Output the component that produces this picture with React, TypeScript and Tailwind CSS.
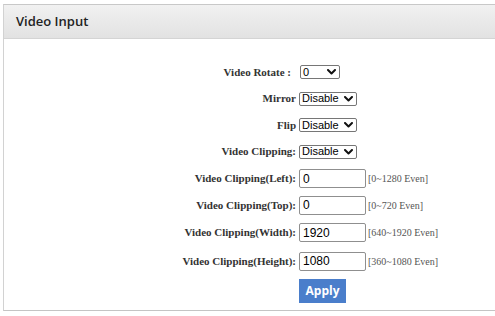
import React from "react";

const Chevron = () => (
  <svg width="9" height="6" viewBox="0 0 9 6" className="shrink-0">
    <path d="M1 1 L4.5 4.5 L8 1" fill="none" stroke="#111" strokeWidth="2" strokeLinecap="round" strokeLinejoin="round" />
  </svg>
);

function Select({ value, w }: { value: string; w: string }) {
  return (
    <div
      className={`${w} h-[14px] flex items-center justify-between border border-[#767676] rounded-[2px] bg-white pl-[2px] pr-[3px] text-[11px] leading-none text-black`}
      style={{ fontFamily: '"Liberation Sans", Arial, sans-serif' }}
    >
      <span>{value}</span>
      <Chevron />
    </div>
  );
}

function Input({ value }: { value: string }) {
  return (
    <input
      readOnly
      value={value}
      className="w-[67px] h-[19px] border border-[#8f8f8f] rounded-[2px] bg-white px-[3px] text-[12px] text-black outline-none"
      style={{ fontFamily: '"Liberation Sans", Arial, sans-serif' }}
    />
  );
}

const serif = { fontFamily: '"Liberation Serif", "Times New Roman", serif' };

function Row({ label, h, children, hint, labelPad = "pr-0" }: { label: string; h: string; children: React.ReactNode; hint?: string; labelPad?: string }) {
  return (
    <div className={`flex items-center ${h}`}>
      <div className={`w-[292px] text-right text-[11px] font-bold text-[#333] ${labelPad}`} style={serif}>
        {label}
      </div>
      <div className="ml-[3px] flex items-center">
        {children}
        {hint && (
          <span className="ml-[2px] text-[10px] text-[#555]" style={serif}>
            {hint}
          </span>
        )}
      </div>
    </div>
  );
}

export default function App() {
  return (
    <div className="w-full h-[316px] bg-white overflow-hidden pt-[4px] pl-[3px]">
      <div className="w-full border-l border-t border-b border-r-0 border-l-[#d2d2d2] border-t-[#c8c8c8] border-b-[#c4c4c4]">
        <div className="h-[34px] flex items-center pl-[12px] bg-gradient-to-b from-[#f1f1f1] to-[#e2e2e2] border-b border-[#d4d4d4]">
          <span
            className="text-[13px] font-semibold text-[#222]"
            style={{ fontFamily: '"Open Sans", "Noto Sans", sans-serif' }}
          >
            Video Input
          </span>
        </div>
        <div className="pt-[20px] pb-[7px]">
          <Row label="Video Rotate :" h="h-[26px]" labelPad="pr-[5px]">
            <div className="ml-[1px]">
              <Select value="0" w="w-[40px]" />
            </div>
          </Row>
          <Row label="Mirror" h="h-[27px]">
            <Select value="Disable" w="w-[58px]" />
          </Row>
          <Row label="Flip" h="h-[26px]">
            <Select value="Disable" w="w-[58px]" />
          </Row>
          <Row label="Video Clipping:" h="h-[27px]">
            <Select value="Disable" w="w-[58px]" />
          </Row>
          <Row label="Video Clipping(Left):" h="h-[27px]" hint="[0~1280 Even]">
            <Input value="0" />
          </Row>
          <Row label="Video Clipping(Top):" h="h-[26px]" hint="[0~720 Even]">
            <Input value="0" />
          </Row>
          <Row label="Video Clipping(Width):" h="h-[29px]" hint="[640~1920 Even]">
            <Input value="1920" />
          </Row>
          <Row label="Video Clipping(Height):" h="h-[28px]" hint="[360~1080 Even]">
            <Input value="1080" />
          </Row>
          <div className="flex mt-[4px]">
            <div className="w-[295px]" />
            <button
              className="w-[47px] h-[24px] bg-[#4a7ecb] text-white text-[12px] font-bold"
              style={{ fontFamily: '"Open Sans", "Noto Sans", sans-serif' }}
            >
              Apply
            </button>
          </div>
        </div>
      </div>
    </div>
  );
}
